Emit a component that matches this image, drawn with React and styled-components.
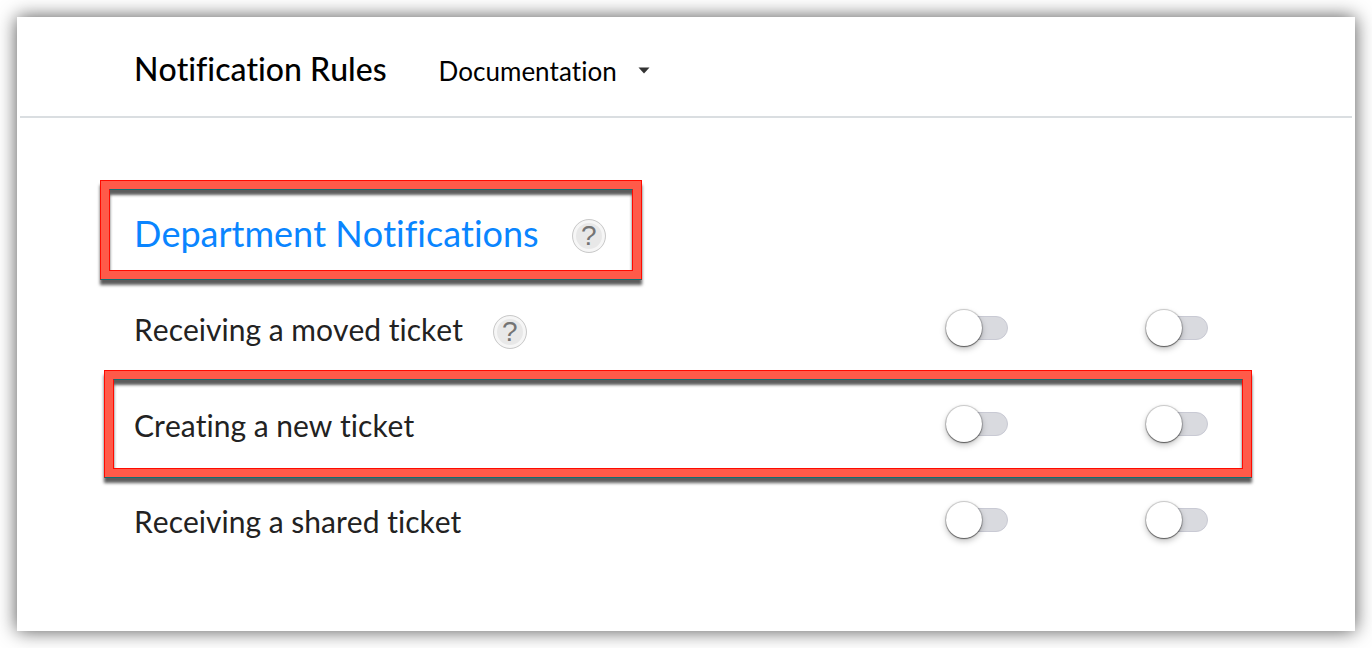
import React, { useState } from "react";
import styled, { createGlobalStyle, css } from "styled-components";

const GlobalStyle = createGlobalStyle`
  *, *::before, *::after { box-sizing: border-box; }
  body {
    margin: 0;
    background: #fff;
    color: #222;
    font-family: Lato, "Liberation Sans", sans-serif;
    font-variant-ligatures: none;
    font-kerning: none;
  }
  h1, h2, ul { margin: 0; padding: 0; }
`;

const Page = styled.div`
  display: flex;
  min-height: 100vh;
  padding: 17px;
`;

const Panel = styled.main`
  flex: 1;
  padding: 0 3px 60px;
  background: #fff;
  box-shadow: 0 0 18px rgba(0, 0, 0, 0.68);
`;

const Header = styled.header`
  display: flex;
  align-items: center;
  gap: 52px;
  height: 101px;
  padding: 8px 0 0 114px;
  border-bottom: 2px solid #dadee1;
`;

const Title = styled.h1`
  color: #000;
  font-size: 32px;
  font-weight: 500;
  line-height: 40px;
  padding-bottom: 4px;
`;

const Picker = styled.label`
  display: flex;
  align-items: center;
  gap: 20px;
`;

const PickerSelect = styled.select`
  appearance: none;
  padding: 0;
  border: 0;
  background: none;
  color: #000;
  font: 400 26px/40px Lato, "Liberation Sans", sans-serif;
  font-variant-ligatures: none;
  font-kerning: none;
`;

const Content = styled.section`
  padding: 62px 100px 0 80px;
`;

const highlighted = css`
  position: relative;
  border: 10px solid #ff5a49;
  box-shadow: 0 5px 3px rgba(0, 0, 0, 0.64), inset 0 5px 3px rgba(0, 0, 0, 0.64);

  &::before,
  &::after {
    content: "";
    position: absolute;
    border: 1px solid #ff0a00;
    pointer-events: none;
  }
  &::before {
    inset: -10px;
    border-bottom-color: #0f6e72;
  }
  &::after {
    inset: -1px;
    border-top-color: #0f6e72;
  }
`;

const SectionHead = styled.div`
  ${highlighted}
  display: flex;
  align-items: center;
  gap: 33px;
  width: fit-content;
  height: 100px;
  padding: 6px 26px 0 24px;
`;

const SectionTitle = styled.h2`
  color: #0a85ff;
  font-size: 36px;
  font-weight: 400;
  line-height: 44px;
`;

const Rules = styled.ul`
  list-style: none;
`;

const Rule = styled.li`
  display: flex;
  align-items: center;
  height: 96px;
  margin-left: 4px;
  padding: 0 44px 0 30px;

  ${(p) =>
    p.$highlight &&
    css`
      ${highlighted}
      height: 108px;
      margin-top: -6px;
      margin-bottom: -6px;
      padding: 0 34px 0 20px;
    `}
`;

const RuleName = styled.span`
  color: #222;
  font-size: 30px;
  line-height: 40px;
`;

const RuleLabel = styled.div`
  display: flex;
  flex: 1;
  align-items: center;
  gap: 30px;
  padding-top: 2px;
`;

const Switches = styled.div`
  display: flex;
  gap: 138px;
`;

const Switch = styled.input`
  appearance: none;
  position: relative;
  display: flex;
  align-items: center;
  width: 62px;
  height: 38px;
  margin: 0;
  cursor: pointer;

  &::before {
    content: "";
    flex: 1;
    height: 24px;
    border: 1px solid #c9cad4;
    border-radius: 12px;
    background: #d9dadf;
  }
  &::after {
    content: "";
    position: absolute;
    left: 0;
    width: 36px;
    height: 36px;
    border-radius: 50%;
    background: #fff;
    box-shadow: 0 0 1px 1px rgba(0, 0, 0, 0.2), 0 1px 1px rgba(0, 0, 0, 0.45),
      0 3px 6px rgba(0, 0, 0, 0.25);
  }
  &:checked::before {
    background: #0a85ff;
  }
  &:checked::after {
    left: 26px;
  }
`;

const HelpButton = styled.button`
  width: 34px;
  height: 34px;
  margin-top: 6px;
  padding: 0;
  border: 1px solid #cacaca;
  border-radius: 50%;
  background: #e8e8e8;
  box-shadow: inset 0 0 0 3px #f6f6f6;
  color: #747474;
  font: 400 28px/32px "Liberation Sans", sans-serif;
`;

const Caret = () => (
  <svg width="12" height="7" viewBox="0 0 12 7" aria-hidden="true">
    <path d="M0.5 0.5h11L6 6.5z" fill="#333" />
  </svg>
);

const Help = ({ topic }) => (
  <HelpButton type="button" aria-label={topic}>
    ?
  </HelpButton>
);

const rules = [
  { name: "Receiving a moved ticket", help: true },
  { name: "Creating a new ticket", highlight: true },
  { name: "Receiving a shared ticket" },
];

const RuleRow = ({ name, help, highlight }) => {
  const [on, setOn] = useState([false, false]);
  const toggle = (i) => setOn(on.map((v, k) => (k === i ? !v : v)));
  return (
    <Rule $highlight={highlight}>
      <RuleLabel>
        <RuleName>{name}</RuleName>
        {help && <Help topic={name} />}
      </RuleLabel>
      <Switches>
        {on.map((v, i) => (
          <Switch
            key={i}
            type="checkbox"
            role="switch"
            aria-label={name}
            checked={v}
            onChange={() => toggle(i)}
          />
        ))}
      </Switches>
    </Rule>
  );
};

export default function App() {
  return (
    <Page>
      <GlobalStyle />
      <Panel>
        <Header>
          <Title>Notification Rules</Title>
          <Picker>
            <PickerSelect aria-label="Documentation">
              <option>Documentation</option>
            </PickerSelect>
            <Caret />
          </Picker>
        </Header>
        <Content>
          <SectionHead>
            <SectionTitle>Department Notifications</SectionTitle>
            <Help topic="Department Notifications" />
          </SectionHead>
          <Rules>
            {rules.map((rule) => (
              <RuleRow key={rule.name} {...rule} />
            ))}
          </Rules>
        </Content>
      </Panel>
    </Page>
  );
}
